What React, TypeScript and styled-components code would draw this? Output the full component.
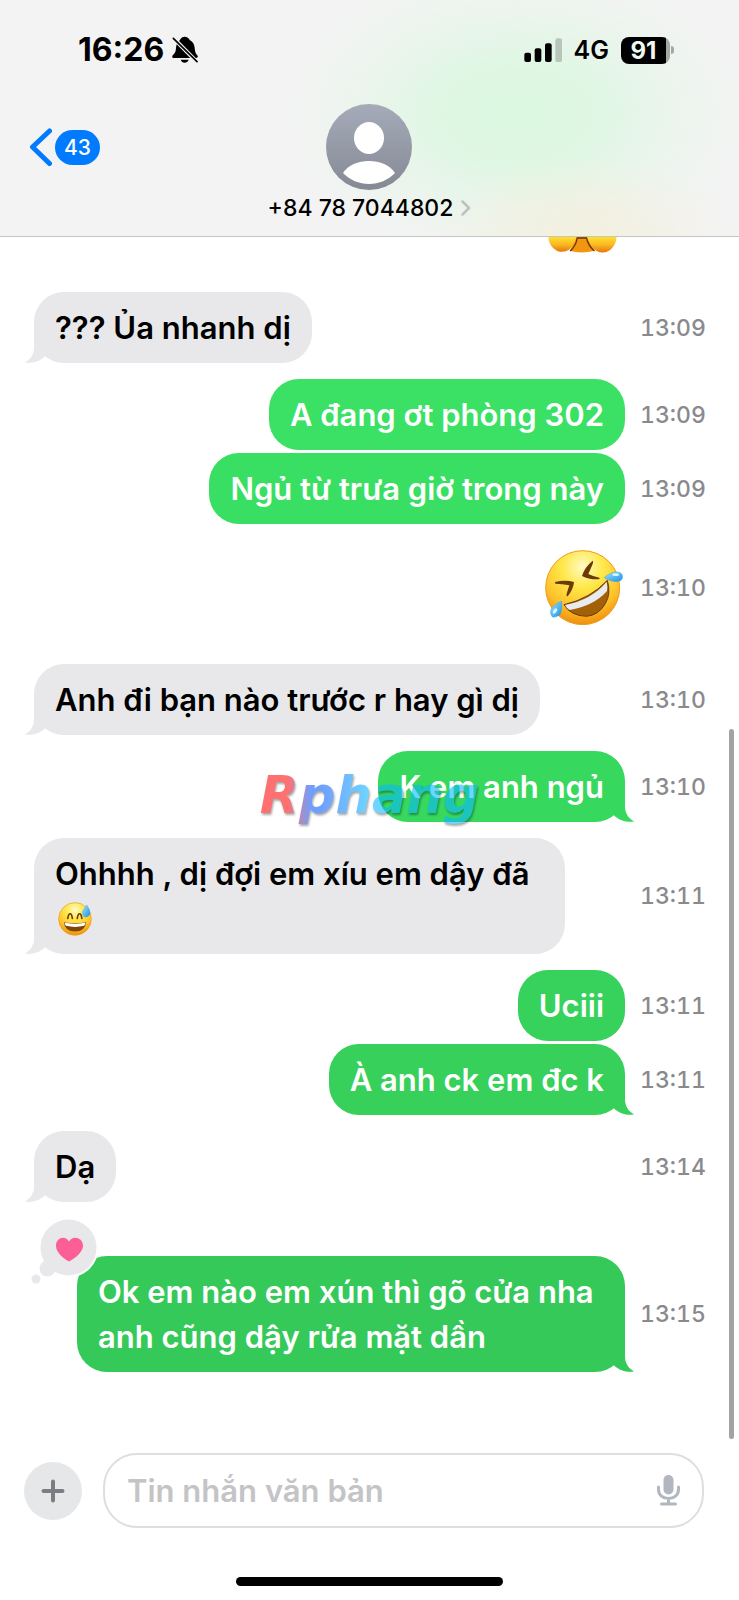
import React from "react";
import styled, { createGlobalStyle } from "styled-components";

const GlobalStyle = createGlobalStyle`
  *, *::before, *::after { box-sizing: border-box; }
  body {
    margin: 0;
    background: #ffffff;
    font-family: Inter, "Noto Sans", sans-serif;
    color: #000000;
  }
  button, input { font: inherit; }
`;

const GREY = "#e8e8ea";

const Page = styled.div`
  position: relative;
  display: flex;
  flex-direction: column;
  min-height: 100vh;
  overflow: hidden;
`;

/* ---------- header ---------- */

const Header = styled.header`
  border-bottom: 1px solid #c3c4c4;
  padding-bottom: 16px;
  background:
    radial-gradient(ellipse 150px 80px at 79% 100%, rgba(243, 240, 221, 0.95), rgba(243, 240, 221, 0.5) 50%, rgba(243, 240, 221, 0) 100%),
    radial-gradient(ellipse 240px 155px at 70% 48%, #dbf8e0 0%, rgba(219, 248, 224, 0.85) 30%, rgba(219, 248, 224, 0.4) 60%, rgba(219, 248, 224, 0.12) 82%, rgba(219, 248, 224, 0) 100%),
    #f3f3f3;
`;

const StatusBar = styled.div`
  display: flex;
  align-items: center;
  justify-content: space-between;
  height: 104px;
  padding: 0 65px 4px 78px;
`;

const StatusGroup = styled.div<{ $gap: number }>`
  display: flex;
  align-items: center;
  gap: ${(p) => p.$gap}px;
`;

const Clock = styled.time`
  font-size: 32px;
  line-height: 36px;
  font-weight: 700;
`;

const Network = styled.span`
  font-size: 25px;
  line-height: 32px;
  font-weight: 600;
`;

const Battery = styled.div`
  display: flex;
  align-items: center;
  gap: 1px;
`;

const BatteryBody = styled.div`
  width: 49px;
  height: 27px;
  padding-right: 4px;
  border-radius: 8px;
  background: linear-gradient(to right, #000000 91%, #a4a8a5 91%);
  color: #f0f8f1;
  font-size: 24px;
  line-height: 27px;
  font-weight: 700;
  text-align: center;
`;

const BatteryNub = styled.div`
  width: 3px;
  height: 8px;
  border-radius: 0 4px 4px 0;
  background: #a4a8a5;
`;

const NavRow = styled.nav`
  display: grid;
  grid-template-columns: 1fr auto 1fr;
`;

const BackButton = styled.button`
  justify-self: start;
  display: flex;
  align-items: center;
  gap: 3px;
  height: 86px;
  margin-left: 29px;
  padding: 0;
  border: 0;
  background: none;
`;

const UnreadCount = styled.span`
  width: 45px;
  height: 35px;
  border-radius: 18px;
  background: #007aff;
  color: #ffffff;
  font-size: 21px;
  line-height: 35px;
  font-weight: 500;
  text-align: center;
`;

const ContactButton = styled.button`
  display: flex;
  flex-direction: column;
  align-items: center;
  gap: 6px;
  padding: 0;
  border: 0;
  background: none;
  color: #000000;
`;

const ContactName = styled.span`
  display: flex;
  align-items: center;
  gap: 8px;
  font-size: 23px;
  line-height: 24px;
  font-weight: 500;
`;

/* ---------- conversation ---------- */

const Thread = styled.main`
  position: relative;
  flex: 1;
  padding: 0 35px 80px 34px;
`;

const Row = styled.div<{ $mine?: boolean; $gap: number }>`
  display: flex;
  align-items: center;
  justify-content: ${(p) => (p.$mine ? "flex-end" : "space-between")};
  margin-top: ${(p) => p.$gap}px;
`;

const Bubble = styled.div<{ $tone: string; $mine?: boolean; $maxWidth?: number }>`
  position: relative;
  max-width: ${(p) => p.$maxWidth ?? 548}px;
  padding: 13px 21px;
  border-radius: 30px;
  background: ${(p) => p.$tone};
  color: ${(p) => (p.$mine ? "#ffffff" : "#000000")};
  font-size: 31px;
  line-height: 45px;
  font-weight: 600;
`;

const TailSvg = styled.svg<{ $mine?: boolean }>`
  position: absolute;
  bottom: 0;
  ${(p) => (p.$mine ? "right: -9px; transform: scaleX(-1);" : "left: -9px;")}
`;

const EmojiSlot = styled.div<{ $right: number }>`
  display: flex;
  margin-right: ${(p) => p.$right}px;
`;

const InlineEmoji = styled.svg`
  display: inline-block;
  vertical-align: -6px;
  margin-left: 3px;
`;

const PaintDefs = styled.svg`
  position: absolute;
`;

const Stamp = styled.time`
  flex: none;
  width: 64px;
  margin-left: 15px;
  color: #8a8a8e;
  font-size: 23px;
  line-height: 28px;
  font-weight: 500;
  font-variant-numeric: tabular-nums;
  white-space: nowrap;
`;

const ReactionSvg = styled.svg`
  position: absolute;
  left: -46px;
  top: -39px;
`;

const ScrollThumb = styled.div`
  position: absolute;
  top: 492px;
  right: 5px;
  bottom: 14px;
  width: 5px;
  border-radius: 3px;
  background: #a3a3a3;
`;

const Watermark = styled.div`
  position: absolute;
  top: 50%;
  left: 50%;
  transform: translate(-50%, -50%);
  padding: 0 4px 8px;
  font-family: "DejaVu Sans", sans-serif;
  font-size: 51px;
  line-height: 64px;
  font-weight: 700;
  font-style: italic;
  color: transparent;
  background: linear-gradient(to right, #ff0c0c 14%, #0a5aff 24%, #0a5aff 28%, #09b8ff 50%);
  -webkit-background-clip: text;
  background-clip: text;
  filter: drop-shadow(1px 2px 1px rgba(0, 0, 0, 0.6));
  opacity: 0.58;
  pointer-events: none;
`;

/* ---------- composer ---------- */

const Composer = styled.form`
  display: flex;
  align-items: center;
  gap: 21px;
  padding: 0 35px 0 24px;
`;

const AddButton = styled.button`
  display: grid;
  place-items: center;
  flex: none;
  width: 58px;
  height: 58px;
  padding: 0;
  border: 0;
  border-radius: 50%;
  background: #e6e7e9;
`;

const Field = styled.div`
  display: flex;
  align-items: center;
  flex: 1;
  min-width: 0;
  height: 75px;
  padding: 0 22px;
  border: 2px solid #dededf;
  border-radius: 34px;
`;

const TextInput = styled.input`
  flex: 1;
  min-width: 0;
  padding: 0;
  border: 0;
  outline: 0;
  background: none;
  font-size: 31px;
  line-height: 45px;
  font-weight: 600;
  &::placeholder { color: #c4c4c6; opacity: 1; }
`;

const MicButton = styled.button`
  display: flex;
  padding: 0;
  border: 0;
  background: none;
`;

const HomeIndicator = styled.div`
  width: 36%;
  height: 9px;
  margin: 49px auto 14px;
  border-radius: 5px;
  background: #000000;
`;

/* ---------- drawings ---------- */

const BellOff = () => (
  <svg width="26" height="28" viewBox="517 109 78 84" aria-label="Im lặng">
    <path d="M555 111c7 0 13 4 15 10 10 5 14 13 15 24 1 12 3 16 8 22 3 4 1 8-4 8H523c-6 0-7-5-3-9 7-6 8-10 9-21 1-12 5-19 12-24 2-6 7-10 14-10Z" />
    <path d="M543 180h24c-2 6-6 9-12 9s-10-3-12-9Z" />
    <path d="M519 113 595 190" stroke="#f3f3f3" strokeWidth="12" />
    <path d="M521 116 592 186" stroke="#000" strokeWidth="5" strokeLinecap="round" />
  </svg>
);

const Signal = () => (
  <svg width="38" height="24" viewBox="466 112 114 72" aria-label="Tín hiệu">
    <rect x="467" y="156" width="20" height="28" rx="6" />
    <rect x="498" y="143" width="20" height="41" rx="6" />
    <rect x="529" y="128" width="20" height="56" rx="6" />
    <rect x="560" y="113" width="20" height="71" rx="6" fill="#b7c5ba" />
  </svg>
);

const Avatar = () => (
  <svg width="86" height="86" viewBox="0 0 86 86" aria-hidden="true">
    <defs>
      <linearGradient id="avatar" x1="0" y1="0" x2="0" y2="1">
        <stop offset="0" stopColor="#a5abb9" />
        <stop offset="1" stopColor="#858994" />
      </linearGradient>
    </defs>
    <circle cx="43" cy="43" r="43" fill="url(#avatar)" />
    <ellipse cx="43" cy="34" rx="15" ry="16" fill="#fff" />
    <path d="M17 69C22 61 32 57 43 57s21 4 26 12c-7 7-16 11-26 11s-19-4-26-11Z" fill="#fff" />
  </svg>
);

const Tail = ({ color, mine }: { color: string; mine?: boolean }) => (
  <TailSvg $mine={mine} width="22" height="30" viewBox="0 0 22 30" aria-hidden="true">
    <path d="M9 0V14C9 21 6 26 0 29.500C7 30.500 14 29 20 23.500L22 0Z" fill={color} />
  </TailSvg>
);

const EmojiPaint = () => (
  <PaintDefs width="0" height="0" aria-hidden="true">
    <defs>
      <radialGradient id="face" cx="0.5" cy="0.22" r="0.8">
        <stop offset="0" stopColor="#fffbc4" />
        <stop offset="0.35" stopColor="#ffe84a" />
        <stop offset="0.7" stopColor="#fdc32b" />
        <stop offset="1" stopColor="#ee8a0c" />
      </radialGradient>
      <linearGradient id="drop" x1="0" y1="0" x2="1" y2="1">
        <stop offset="0" stopColor="#9fe6ff" />
        <stop offset="1" stopColor="#1d8fe0" />
      </linearGradient>
      <linearGradient id="hand" x1="0" y1="0" x2="0" y2="1">
        <stop offset="0" stopColor="#ffe02c" />
        <stop offset="0.5" stopColor="#fcb822" />
        <stop offset="1" stopColor="#e5760a" />
      </linearGradient>
    </defs>
  </PaintDefs>
);

const RoflEmoji = () => (
  <svg width="78" height="75" viewBox="44 29 234 225" role="img" aria-label="🤣">
    <circle cx="157" cy="142" r="111" fill="url(#face)" stroke="#ee9a17" strokeWidth="3" />
    <g fill="#6b3a06">
      <path d="M74 125Q105 118 131 125Q129 147 112 168Q107 169 109 160Q113 147 117 135Q95 130 75 130Z" />
      <path d="M187 61Q190 63 187 71Q179 90 174 101Q190 109 207 112Q210 116 205 117Q175 118 155 107Q163 80 187 61Z" />
    </g>
    <path d="M101 193Q180 175 231 120Q243 160 225 190Q205 225 168 228Q120 226 101 193Z" fill="#a26106" stroke="#6b3a06" strokeWidth="3" />
    <path d="M104 194Q185 178 229 124Q232 140 230 152Q190 197 118 209Q108 203 104 194Z" fill="#e9eaf0" />
    <g fill="url(#drop)" stroke="#2f9bdc" strokeWidth="1">
      <path d="M221 112Q240 94 262 95Q277 97 277 110Q275 124 258 124Q240 124 221 112Z" />
      <path d="M94 182Q97 205 90 222Q80 233 66 230Q57 221 62 207Q72 190 94 182Z" />
    </g>
    <ellipse cx="256" cy="103" rx="10" ry="4" fill="#d7f6ff" />
    <ellipse cx="74" cy="212" rx="5" ry="9" fill="#d7f6ff" transform="rotate(35 74 212)" />
  </svg>
);

const SweatSmileEmoji = () => (
  <InlineEmoji width="34" height="34" viewBox="176 786 104 104" role="img" aria-label="😅">
    <circle cx="228" cy="838" r="50" fill="url(#face)" stroke="#ee9a17" strokeWidth="2" />
    <path d="M206 836Q208 822 213 822Q218 822 220 836M235 836Q237 822 242 822Q247 822 249 836" fill="none" stroke="#6b3a06" strokeWidth="5" strokeLinecap="round" />
    <path d="M194 847Q228 857 262 847Q260 876 228 876Q196 876 194 847Z" fill="#7c4706" />
    <path d="M196 849Q228 858 260 849Q259 856 256 859Q228 866 200 859Q197 856 196 849Z" fill="#fff" />
    <path d="M264 795Q276 812 274 823Q269 834 259 832Q248 828 251 815Q255 805 264 795Z" fill="url(#drop)" stroke="#2f9bdc" />
  </InlineEmoji>
);

const HandsEmoji = () => (
  <svg width="69" height="16" viewBox="538 709 206 48" role="img" aria-label="🫣">
    <path d="M620 709H660L678 750Q640 760 603 751Z" fill="#f2960f" />
    <path d="M604 751Q622 735 625 712H653Q658 735 677 751" fill="none" stroke="#6e3503" strokeWidth="4" />
    <path d="M538 709Q540 738 565 751Q586 758 602 746Q617 730 623 709Z" fill="url(#hand)" />
    <path d="M655 709Q662 735 682 750Q704 762 724 748Q742 733 743 709Z" fill="url(#hand)" />
  </svg>
);

const HeartReaction = () => (
  <ReactionSvg width="68" height="68" viewBox="0 0 68 68" role="img" aria-label="Yêu thích">
    <g transform="translate(-31 -1217)">
      <circle cx="68.500" cy="1247.500" r="30" fill="#fff" />
      <circle cx="68.500" cy="1247.500" r="28" fill={GREY} />
      <circle cx="47.500" cy="1268.500" r="8" fill={GREY} />
      <circle cx="36" cy="1279" r="4.500" fill={GREY} />
      <path d="M69 1261.500C62 1257.500 56 1252 56 1245.500C56 1237 66 1235 69 1241.500C72 1235 83 1237 83 1245.500C83 1252 76 1257.500 69 1261.500Z" fill="#fb5f96" />
    </g>
  </ReactionSvg>
);

/* ---------- content ---------- */

type Message = {
  time?: string;
  text?: string;
  mine?: boolean;
  tail?: boolean;
  tone?: string;
  gap: number;
  maxWidth?: number;
  emoji?: React.ReactNode;
  emojiInset?: number;
  suffix?: React.ReactNode;
  reaction?: React.ReactNode;
};

const messages: Message[] = [
  { mine: true, gap: 0, emoji: <HandsEmoji />, emojiInset: 87 },
  { text: "??? Ủa nhanh dị", time: "13:09", tail: true, gap: 39 },
  { text: "A đang ơt phòng 302", time: "13:09", mine: true, tone: "#3ae164", gap: 16 },
  { text: "Ngủ từ trưa giờ trong này", time: "13:09", mine: true, tone: "#39df62", gap: 3 },
  { mine: true, time: "13:10", gap: 26, emoji: <RoflEmoji />, emojiInset: 2 },
  { text: "Anh đi bạn nào trước r hay gì dị", time: "13:10", tail: true, gap: 39 },
  { text: "K em anh ngủ", time: "13:10", mine: true, tail: true, tone: "#37d85e", gap: 16 },
  { text: "Ohhhh , dị đợi em xíu em dậy đã ", time: "13:11", tail: true, gap: 16, maxWidth: 531, suffix: <SweatSmileEmoji /> },
  { text: "Uciii", time: "13:11", mine: true, tone: "#36d25b", gap: 16 },
  { text: "À anh ck em đc k", time: "13:11", mine: true, tail: true, tone: "#36d05b", gap: 3 },
  { text: "Dạ", time: "13:14", tail: true, gap: 16 },
  { text: "Ok em nào em xún thì gõ cửa nha anh cũng dậy rửa mặt dần", time: "13:15", mine: true, tail: true, tone: "#35c95a", gap: 54, reaction: <HeartReaction /> },
];

const MessageRow = ({ m }: { m: Message }) => {
  const tone = m.tone ?? GREY;
  return (
    <Row $mine={m.mine} $gap={m.gap}>
      {m.emoji ? (
        <EmojiSlot $right={m.emojiInset ?? 0}>{m.emoji}</EmojiSlot>
      ) : (
        <Bubble $tone={tone} $mine={m.mine} $maxWidth={m.maxWidth}>
          {m.text}
          {m.suffix}
          {m.tail && <Tail color={tone} mine={m.mine} />}
          {m.reaction}
        </Bubble>
      )}
      {m.time && <Stamp>{m.time}</Stamp>}
    </Row>
  );
};

export default function App() {
  return (
    <Page>
      <GlobalStyle />
      <EmojiPaint />
      <Header>
        <StatusBar>
          <StatusGroup $gap={8}>
            <Clock>16:26</Clock>
            <BellOff />
          </StatusGroup>
          <StatusGroup $gap={12}>
            <Signal />
            <Network>4G</Network>
            <Battery>
              <BatteryBody>91</BatteryBody>
              <BatteryNub />
            </Battery>
          </StatusGroup>
        </StatusBar>
        <NavRow>
          <BackButton type="button" aria-label="Quay lại, 43 tin nhắn chưa đọc">
            <svg width="23" height="38" viewBox="0 0 23 38" aria-hidden="true">
              <path d="M20.500 3 3.500 19 20.500 35.500" fill="none" stroke="#007aff" strokeWidth="5" strokeLinecap="round" strokeLinejoin="round" />
            </svg>
            <UnreadCount>43</UnreadCount>
          </BackButton>
          <ContactButton type="button">
            <Avatar />
            <ContactName>
              +84 78 7044802
              <svg width="10" height="16" viewBox="0 0 10 16" aria-hidden="true">
                <path d="M1.500 1.500 8 8 1.500 14.500" fill="none" stroke="#bcc2bd" strokeWidth="2.500" strokeLinecap="round" strokeLinejoin="round" />
              </svg>
            </ContactName>
          </ContactButton>
        </NavRow>
      </Header>

      <Thread>
        {messages.map((m, i) => (
          <MessageRow key={i} m={m} />
        ))}
        <ScrollThumb />
      </Thread>

      <Composer onSubmit={(e) => e.preventDefault()}>
        <AddButton type="button" aria-label="Thêm">
          <svg width="24" height="24" viewBox="0 0 24 24" aria-hidden="true">
            <path d="M12 2.500V21.500M2.500 12H21.500" stroke="#7c7c82" strokeWidth="4" strokeLinecap="round" />
          </svg>
        </AddButton>
        <Field>
          <TextInput type="text" aria-label="Tin nhắn văn bản" placeholder="Tin nhắn văn bản" />
          <MicButton type="button" aria-label="Đọc chính tả">
            <svg width="23" height="31" viewBox="0 0 23 31" aria-hidden="true">
              <rect x="6.500" y="0" width="10" height="19.500" rx="5" fill="#b1b6bf" />
              <path d="M1.500 12V14.500C1.500 20 6 23.500 11.500 23.500S21.500 20 21.500 14.500V12M11.500 23.500V29M4.500 29H18.500" fill="none" stroke="#b1b6bf" strokeWidth="3" strokeLinecap="round" />
            </svg>
          </MicButton>
        </Field>
      </Composer>
      <HomeIndicator />
      <Watermark>Rphang</Watermark>
    </Page>
  );
}
